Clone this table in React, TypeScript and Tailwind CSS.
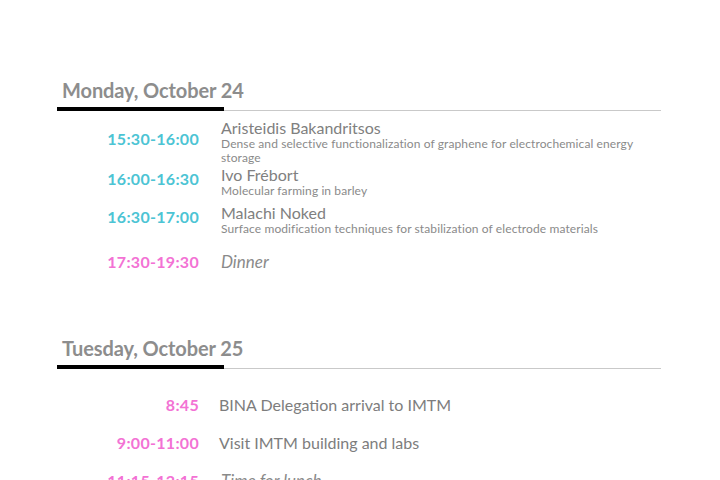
import React from "react";

type Talk = {
  time: string;
  name: string;
  title?: string;
  mt: string;
};

const monday: Talk[] = [
  {
    time: "15:30-16:00",
    name: "Aristeidis Bakandritsos",
    title:
      "Dense and selective functionalization of graphene for electrochemical energy storage",
    mt: "mt-[7px]",
  },
  {
    time: "16:00-16:30",
    name: "Ivo Frébort",
    title: "Molecular farming in barley",
    mt: "mt-0",
  },
  {
    time: "16:30-17:00",
    name: "Malachi Noked",
    title: "Surface modification techniques for stabilization of electrode materials",
    mt: "mt-[5px]",
  },
];

function DayHeader({ label }: { label: string }) {
  return (
    <div>
      <h2 className="pl-[5px] text-[20px] leading-6 font-bold text-[#8d8d8d] tracking-[-0.1px]">
        {label}
      </h2>
      <div className="mt-[5px] flex items-end">
        <div className="h-[4px] w-[167px] bg-black" />
        <div className="h-px flex-1 bg-[#c9c9c9]" />
      </div>
    </div>
  );
}

function TalkRow({ talk }: { talk: Talk }) {
  return (
    <div className={`flex items-center ${talk.mt}`}>
      <div className="w-[142px] shrink-0 pb-[6px] text-right text-[16px] font-bold tracking-[0.3px] text-[#4cc4d4]">
        {talk.time}
      </div>
      <div className="ml-[22px] flex-1">
        <div className="text-[16px] leading-[19px] text-[#808080]">{talk.name}</div>
        <div className="text-[12px] leading-[14px] tracking-[0.1px] text-[#8a8a8a]">
          {talk.title}
        </div>
      </div>
    </div>
  );
}

function PlainRow({
  time,
  text,
  italic,
  className,
}: {
  time: string;
  text: string;
  italic?: boolean;
  className?: string;
}) {
  return (
    <div className={`flex h-[38px] items-center ${className ?? ""}`}>
      <div className="w-[142px] shrink-0 text-right text-[16px] font-bold tracking-[0.3px] text-[#f372d4]">
        {time}
      </div>
      <div
        className={
          italic
            ? "ml-[22px] text-[17px] italic text-[#8a8a8a]"
            : "ml-[20px] text-[16px] text-[#7d7d7d]"
        }
      >
        {text}
      </div>
    </div>
  );
}

export default function App() {
  return (
    <div className="h-[480px] w-[720px] overflow-hidden bg-white font-['Lato',sans-serif]">
      <div className="ml-[57px] w-[604px] pt-[78px]">
        <DayHeader label="Monday, October 24" />
        {monday.map((t) => (
          <TalkRow key={t.time} talk={t} />
        ))}
        <PlainRow time="17:30-19:30" text="Dinner" italic className="mt-[7px]" />

        <div className="mt-[55px]">
          <DayHeader label="Tuesday, October 25" />
        </div>
        <PlainRow time="8:45" text="BINA Delegation arrival to IMTM" className="mt-[17px]" />
        <PlainRow time="9:00-11:00" text="Visit IMTM building and labs" />
        <PlainRow time="11:15-12:15" text="Time for lunch" italic />
      </div>
    </div>
  );
}
